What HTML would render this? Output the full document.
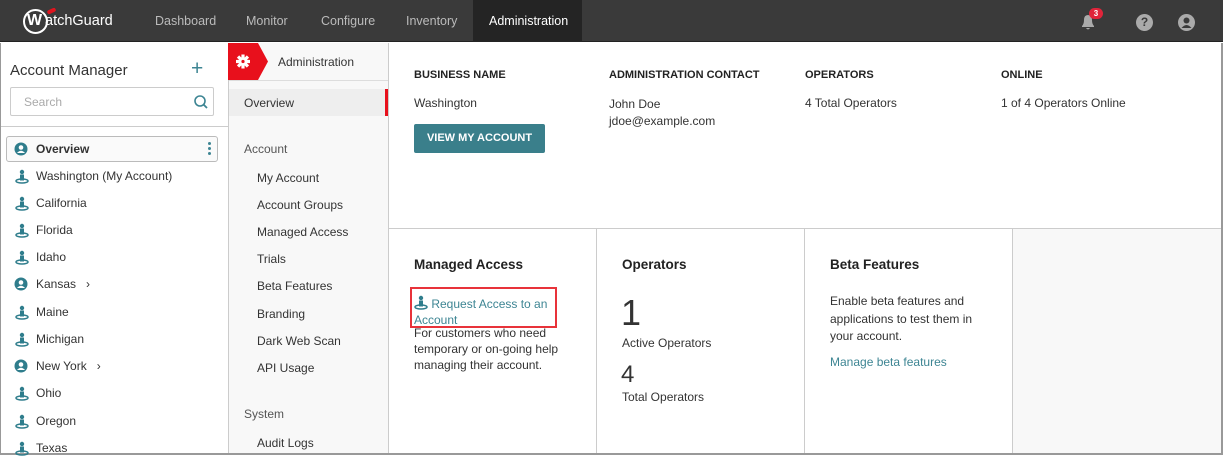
<!DOCTYPE html><html><head><style>
*{margin:0;padding:0;box-sizing:border-box}
body{width:1223px;height:455px;overflow:hidden;font-family:"Liberation Sans",sans-serif;font-size:12px;color:#333;background:#fff;position:relative}
.a{position:absolute;white-space:nowrap}
.top{left:0;top:0;width:1223px;height:42px;background:#3a3a3a;border-bottom:1px solid #222}
.nav{top:14px;color:#bbb;font-size:12.5px}
.acc{left:15px;font-size:12px;color:#333}
.ic{position:absolute;left:-18px;top:0}
.mn{left:257px;color:#333}
.h{font-weight:bold;font-size:11px;color:#222}
.teal{color:#3d8593}
</style></head><body>
<div class="a top"></div>
<div class="a" style="left:23px;top:9px;width:25px;height:25px;border:2px solid #fff;border-radius:50%"></div>
<div class="a" style="left:27px;top:12px;color:#fff;font-weight:bold;font-size:16px">W</div>
<div class="a" style="left:45px;top:13px;color:#fff;font-size:14.5px">atchGuard</div>
<div class="a" style="left:47px;top:9px;width:9px;height:4px;background:#e0141e;border-radius:2px;transform:rotate(-25deg)"></div>
<div class="a nav" style="left:155px">Dashboard</div>
<div class="a nav" style="left:246px">Monitor</div>
<div class="a nav" style="left:321px">Configure</div>
<div class="a nav" style="left:406px">Inventory</div>
<div class="a" style="left:473px;top:0;width:109px;height:42px;background:#242424"></div>
<div class="a nav" style="left:489px;color:#fff">Administration</div>
<svg class="a" style="left:1078px;top:12px" width="20" height="20"><path d="M4 15 L4 14 Q6 12 6 8 Q6 3 10 3 Q14 3 14 8 Q14 12 16 14 L16 15Z M8 16 Q10 19 12 16Z" fill="#aaa"/></svg>
<div class="a" style="left:1089px;top:8px;width:14px;height:11px;background:#e0243a;border-radius:6px;color:#fff;font-size:8px;font-weight:bold;text-align:center;line-height:11px">3</div>
<div class="a" style="left:1136px;top:14px;width:17px;height:17px;border-radius:50%;background:#aaa;color:#3a3a3a;font-weight:bold;font-size:12px;text-align:center;line-height:17px">?</div>
<svg class="a" style="left:1178px;top:14px" width="17" height="17"><circle cx="8.5" cy="8.5" r="8.5" fill="#aaa"/><circle cx="8.5" cy="6.5" r="3" fill="#3a3a3a"/><path d="M3.5 14 Q8.5 8 13.5 14Z" fill="#3a3a3a"/></svg>

<div class="a" style="left:0;top:43px;width:1px;height:412px;background:#999"></div>
<div class="a" style="left:1221px;top:43px;width:2px;height:412px;background:#999"></div>
<div class="a" style="left:0;top:453px;width:1223px;height:2px;background:#999"></div>
<div class="a" style="left:10px;top:62px;font-size:15px;color:#333">Account Manager</div>
<div class="a teal" style="left:191px;top:57px;font-size:21px;font-weight:300">+</div>
<div class="a" style="left:10px;top:87px;width:204px;height:29px;border:1px solid #ccc;border-radius:2px"></div>
<div class="a" style="left:24px;top:95px;color:#aaa">Search</div>
<svg class="a" style="left:193px;top:94px" width="16" height="16"><circle cx="7" cy="7" r="5" stroke="#3d8593" stroke-width="1.6" fill="none"/><path d="M10.5 10.5 L14 14" stroke="#3d8593" stroke-width="1.8"/></svg>
<div class="a" style="left:1px;top:126px;width:227px;height:1px;background:#ccc"></div>
<div class="a" style="left:6px;top:136px;width:212px;height:26px;border:1px solid #bbb;border-radius:3px;background:#fafafa"></div>
<div class="a" style="left:208px;top:142px;width:3px;height:3px;background:#3d8593;border-radius:50%;box-shadow:0 5px #3d8593,0 10px #3d8593"></div>
<svg width="0" height="0" style="position:absolute"><defs>
<g id="p"><circle cx="7" cy="3" r="2.2" fill="#2f7d8c"/><rect x="5" y="5.5" width="4" height="6" fill="#2f7d8c"/><ellipse cx="7" cy="12" rx="6" ry="2" fill="none" stroke="#2f7d8c" stroke-width="1.5"/></g>
<g id="u"><circle cx="7" cy="7" r="6.5" fill="#2f7d8c"/><circle cx="7" cy="5.5" r="2.3" fill="#fff"/><path d="M3 11 Q7 6.5 11 11Z" fill="#fff"/></g>
</defs></svg>
<div class="a acc" style="left:36px;top:142px;font-weight:bold"><svg class="ic" style="left:-22px" width="14" height="14"><use href="#u"/></svg>Overview</div>
<div class="a acc" style="left:36px;top:169px"><svg class="ic" style="left:-21px" width="14" height="15"><use href="#p"/></svg>Washington (My Account)</div>
<div class="a acc" style="left:36px;top:196px"><svg class="ic" style="left:-21px" width="14" height="15"><use href="#p"/></svg>California</div>
<div class="a acc" style="left:36px;top:223px"><svg class="ic" style="left:-21px" width="14" height="15"><use href="#p"/></svg>Florida</div>
<div class="a acc" style="left:36px;top:250px"><svg class="ic" style="left:-21px" width="14" height="15"><use href="#p"/></svg>Idaho</div>
<div class="a acc" style="left:36px;top:277px"><svg class="ic" style="left:-22px" width="14" height="14"><use href="#u"/></svg>Kansas &nbsp;&nbsp;›</div>
<div class="a acc" style="left:36px;top:305px"><svg class="ic" style="left:-21px" width="14" height="15"><use href="#p"/></svg>Maine</div>
<div class="a acc" style="left:36px;top:332px"><svg class="ic" style="left:-21px" width="14" height="15"><use href="#p"/></svg>Michigan</div>
<div class="a acc" style="left:36px;top:359px"><svg class="ic" style="left:-22px" width="14" height="14"><use href="#u"/></svg>New York &nbsp;&nbsp;›</div>
<div class="a acc" style="left:36px;top:386px"><svg class="ic" style="left:-21px" width="14" height="15"><use href="#p"/></svg>Ohio</div>
<div class="a acc" style="left:36px;top:414px"><svg class="ic" style="left:-21px" width="14" height="15"><use href="#p"/></svg>Oregon</div>
<div class="a acc" style="left:36px;top:441px"><svg class="ic" style="left:-21px" width="14" height="15"><use href="#p"/></svg>Texas</div>

<div class="a" style="left:228px;top:43px;width:161px;height:410px;background:#f8f8f8;border-left:1px solid #ccc;border-right:1px solid #ccc"></div>
<div class="a" style="left:229px;top:80px;width:159px;height:1px;background:#ddd"></div>
<svg class="a" style="left:228px;top:43px" width="42" height="37"><path d="M0 0 H30 L40 18.5 L30 37 H0Z" fill="#e8101c"/><g fill="#fff" transform="translate(15 18.5)"><rect x="-1.6" y="-7" width="3.2" height="14"/><rect x="-1.6" y="-7" width="3.2" height="14" transform="rotate(45)"/><rect x="-1.6" y="-7" width="3.2" height="14" transform="rotate(90)"/><rect x="-1.6" y="-7" width="3.2" height="14" transform="rotate(135)"/><circle r="4.5"/></g><circle cx="15" cy="18.5" r="1.6" fill="#e8101c"/></svg>
<div class="a" style="left:278px;top:55px">Administration</div>
<div class="a" style="left:229px;top:89px;width:156px;height:27px;background:#eee"></div>
<div class="a" style="left:385px;top:89px;width:3px;height:27px;background:#e8101c"></div>
<div class="a" style="left:244px;top:96px">Overview</div>
<div class="a" style="left:244px;top:142px;color:#555">Account</div>
<div class="a mn" style="top:171px">My Account</div>
<div class="a mn" style="top:198px">Account Groups</div>
<div class="a mn" style="top:225px">Managed Access</div>
<div class="a mn" style="top:252px">Trials</div>
<div class="a mn" style="top:279px">Beta Features</div>
<div class="a mn" style="top:307px">Branding</div>
<div class="a mn" style="top:334px">Dark Web Scan</div>
<div class="a mn" style="top:361px">API Usage</div>
<div class="a" style="left:244px;top:407px;color:#555">System</div>
<div class="a mn" style="top:436px">Audit Logs</div>

<div class="a h" style="left:414px;top:69px">BUSINESS NAME</div>
<div class="a h" style="left:609px;top:69px">ADMINISTRATION CONTACT</div>
<div class="a h" style="left:805px;top:69px">OPERATORS</div>
<div class="a h" style="left:1001px;top:69px">ONLINE</div>
<div class="a" style="left:414px;top:96px">Washington</div>
<div class="a" style="left:609px;top:96px;line-height:17px">John Doe<br>jdoe@example.com</div>
<div class="a" style="left:805px;top:96px">4 Total Operators</div>
<div class="a" style="left:1001px;top:96px">1 of 4 Operators Online</div>
<div class="a" style="left:414px;top:124px;width:131px;height:29px;background:#3a7f8b;border-radius:2px;color:#fff;font-weight:bold;font-size:11px;text-align:center;line-height:29px">VIEW MY ACCOUNT</div>
<div class="a" style="left:389px;top:228px;width:832px;height:1px;background:#ccc"></div>
<div class="a" style="left:1012px;top:229px;width:209px;height:224px;background:#f8f8f8"></div>
<div class="a" style="left:596px;top:229px;width:1px;height:224px;background:#ccc"></div>
<div class="a" style="left:804px;top:229px;width:1px;height:224px;background:#ccc"></div>
<div class="a" style="left:1012px;top:229px;width:1px;height:224px;background:#ccc"></div>
<div class="a" style="left:414px;top:257px;font-weight:bold;font-size:13.5px;color:#222">Managed Access</div>
<div class="a" style="left:410px;top:287px;width:147px;height:41px;border:2px solid #e8333a"></div>
<div class="a teal" style="left:414px;top:295px;line-height:16px"><svg style="vertical-align:-2px" width="14" height="15"><use href="#p"/></svg> Request Access to an<br>Account</div>
<div class="a" style="left:414px;top:325px;line-height:16px">For customers who need<br>temporary or on-going help<br>managing their account.</div>
<div class="a" style="left:622px;top:257px;font-weight:bold;font-size:13.5px;color:#222">Operators</div>
<div class="a" style="left:621px;top:292px;font-size:36px;font-weight:300">1</div>
<div class="a" style="left:622px;top:336px">Active Operators</div>
<div class="a" style="left:621px;top:361px;font-size:24px;font-weight:300">4</div>
<div class="a" style="left:622px;top:390px">Total Operators</div>
<div class="a" style="left:830px;top:257px;font-weight:bold;font-size:13.5px;color:#222">Beta Features</div>
<div class="a" style="left:830px;top:293px;line-height:17.5px">Enable beta features and<br>applications to test them in<br>your account.</div>
<div class="a teal" style="left:830px;top:355px">Manage beta features</div>
</body></html>
